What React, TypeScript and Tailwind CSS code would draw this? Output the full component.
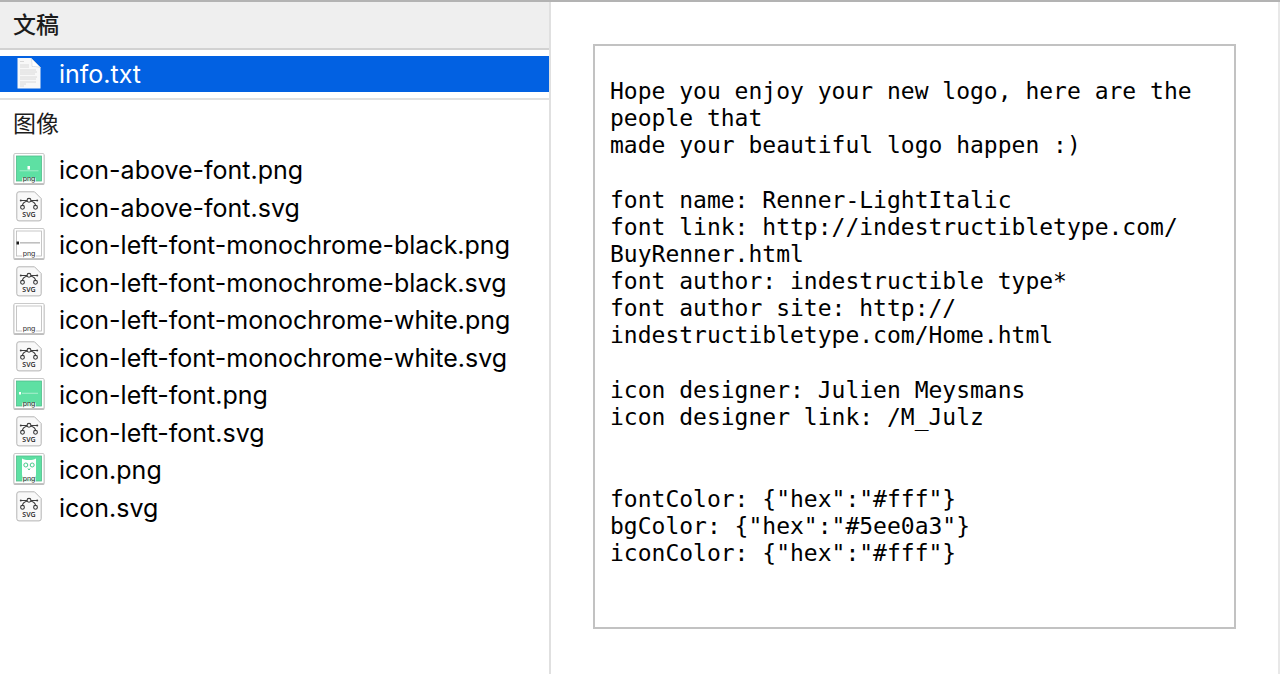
type Thumb = "above" | "black" | "white" | "left" | "owl";

interface ImageFile {
    name: string;
    thumb?: Thumb;
}

const images: ImageFile[] = [
    { name: "icon-above-font.png", thumb: "above" },
    { name: "icon-above-font.svg" },
    { name: "icon-left-font-monochrome-black.png", thumb: "black" },
    { name: "icon-left-font-monochrome-black.svg" },
    { name: "icon-left-font-monochrome-white.png", thumb: "white" },
    { name: "icon-left-font-monochrome-white.svg" },
    { name: "icon-left-font.png", thumb: "left" },
    { name: "icon-left-font.svg" },
    { name: "icon.png", thumb: "owl" },
    { name: "icon.svg" },
];

// \u200b marks where a long link may wrap
const previewText = [
    "Hope you enjoy your new logo, here are the people that\nmade your beautiful logo happen :)",
    "font name: Renner-LightItalic\nfont link: http://indestructibletype.com/\u200bBuyRenner.html\nfont author: indestructible type*\nfont author site: http://\u200bindestructibletype.com/Home.html",
    "icon designer: Julien Meysmans\nicon designer link: /M_Julz",
];

const colorText = 'fontColor: {"hex":"#fff"}\nbgColor: {"hex":"#5ee0a3"}\niconColor: {"hex":"#fff"}';

function TextFileIcon() {
    return (
        <svg viewBox="0 0 26 32" className="h-8 w-[26px]" aria-hidden="true">
            <path d="M1.500 0h13.500l9.500 9.500v21h-23z" fill="#f8f8f8" />
            <path d="M15 0c1 3 1 6 1 8.500 2 0 5 0 8.500 1z" fill="#ffffff" stroke="#c4c8ce" strokeWidth="0.5" />
            <path
                d="M4 3.500h4M4 7h9M4 9h9M4 12h16M4 14h17M4 16h15M4 19h17M4 21h16M4 24h16M4 26h6M4 28h4"
                stroke="#d0d0d0"
                strokeWidth="0.8"
            />
        </svg>
    );
}

function SvgFileIcon() {
    return (
        <svg viewBox="0 0 26 31" className="h-[31px] w-[26px]" aria-hidden="true">
            <path
                d="M3 .8h15.500l6.700 6.700v20.200a2.200 2.200 0 0 1-2.200 2.200H3a2.200 2.200 0 0 1-2.200-2.200V3A2.200 2.200 0 0 1 3 .8z"
                fill="#f8f8f8"
                stroke="#b4b4b4"
                strokeWidth="1"
            />
            <g fill="none" stroke="#3c3c3c" strokeWidth="1.100">
                <path d="M4.500 9.500h6.500M15 9.500h6.500M11.200 10C8 11 6.500 12.500 6.500 14.500M14.800 10c3.200 1 4.700 2.500 4.700 4.500" />
                <circle cx="13" cy="9.300" r="1.900" fill="#f8f8f8" />
                <circle cx="6.500" cy="16.300" r="1.900" />
                <circle cx="19.500" cy="16.300" r="1.900" />
            </g>
            <circle cx="4.800" cy="9.500" r="1" fill="#3c3c3c" />
            <circle cx="21.200" cy="9.500" r="1" fill="#3c3c3c" />
            <text
                x="13"
                y="26"
                textAnchor="middle"
                fontSize="7"
                fontWeight="600"
                fontFamily="Open Sans, sans-serif"
                fill="#222222"
            >
                SVG
            </text>
        </svg>
    );
}

function PngFileIcon({ thumb }: { thumb: Thumb }) {
    const mono = thumb === "black" || thumb === "white";

    return (
        <svg viewBox="0 0 32 32" className="h-8 w-8" aria-hidden="true">
            <rect x="0.500" y="1" width="31" height="31" rx="1.500" fill="#bdbdbd" />
            <rect x="1" y="0.500" width="30" height="30" rx="1" fill="#ffffff" stroke="#bcbcbc" strokeWidth="0.800" />
            <rect
                x="3.500"
                y="3"
                width="25"
                height="25"
                fill={mono ? "#ffffff" : "#5ee0a3"}
                stroke={mono ? "#b9b9b9" : "#4fbd8a"}
                strokeWidth="0.800"
            />
            {thumb === "above" && (
                <g fill="#ffffff">
                    <rect x="14.500" y="13" width="2.500" height="3.500" />
                    <path d="M6.500 17.500h19v.7h-19z" opacity="0.6" />
                </g>
            )}
            {thumb === "black" && (
                <g fill="#1c1c1c">
                    <rect x="3.500" y="13.500" width="2.500" height="3" />
                    <path d="M7 14.500h20v.8H7z" opacity="0.55" />
                </g>
            )}
            {thumb === "left" && (
                <g fill="#ffffff">
                    <rect x="6" y="14" width="2" height="2.500" />
                    <path d="M9 14.800h16v.8H9z" opacity="0.6" />
                </g>
            )}
            {thumb === "owl" && (
                <g>
                    <path d="M9 5.500c2 1.500 4 1.500 7 1.500s5 0 7-1.500v16c0 3-1.500 4.500-4 4.500h-6c-2.500 0-4-1.500-4-4.500z" fill="#ffffff" />
                    <g fill="none" stroke="#46c98b">
                        <circle cx="12.800" cy="12" r="2" />
                        <circle cx="19.200" cy="12" r="2" />
                        <path d="M15 15.500l1 1.500 1-1.500" />
                    </g>
                </g>
            )}
            <rect x="9" y="24.500" width="14" height="5" rx="1" fill="#ffffff" opacity={mono ? 1 : 0.7} />
            <text
                x="16"
                y="28"
                textAnchor="middle"
                fontSize="7"
                fontFamily="Inter, sans-serif"
                fill="#2a2a2a"
            >
                png
            </text>
        </svg>
    );
}

export default function App() {
    return (
        <div className="flex min-h-screen border-t-2 border-[#b3b3b3] bg-white text-[#1c1c1c]">
            {/* File list */}
            <aside className="w-[551px] shrink-0 border-r-2 border-[#e0e0e0] font-['Inter','Noto_Sans_CJK_SC',sans-serif] text-[25px] leading-7">
                <section>
                    <h2 className="border-b-2 border-[#d2d2d2] bg-[#efefef] px-[13px] py-[9px] text-[23px] font-medium">
                        文稿
                    </h2>
                    <div className="border-b-2 border-[#e0e0e0] py-[6px]">
                        <button
                            type="button"
                            aria-pressed="true"
                            className="flex w-full items-center gap-[17px] bg-[#0261e2] py-[2px] pl-4 text-left text-white"
                        >
                            <TextFileIcon />
                            info.txt
                        </button>
                    </div>
                </section>

                <section>
                    <h2 className="px-[13px] pt-[10px] pb-3 text-[23px]">图像</h2>
                    <ul>
                        {images.map((file) => (
                            <li key={file.name}>
                                <button
                                    type="button"
                                    className="flex w-full items-center gap-[14px] py-[3px] pl-[13px] text-left text-black"
                                >
                                    <span className="flex w-8 justify-center">
                                        {file.thumb ? <PngFileIcon thumb={file.thumb} /> : <SvgFileIcon />}
                                    </span>
                                    <span className="pt-[2px]">{file.name}</span>
                                </button>
                            </li>
                        ))}
                    </ul>
                </section>
            </aside>

            {/* Preview */}
            <main className="flex-1 border-r-2 border-[#e8e8e8] px-[42px] py-[42px]">
                <article className="border-2 border-[#c2c2c2] px-[15px] pt-8 pb-[60px] font-['DejaVu_Sans_Mono',monospace] text-[23px] leading-[27px] whitespace-pre-wrap text-black">
                    <div className="space-y-7">
                        {previewText.map((text) => (
                            <p key={text}>{text}</p>
                        ))}
                    </div>
                    <p className="mt-[55px]">{colorText}</p>
                </article>
            </main>
        </div>
    );
}
